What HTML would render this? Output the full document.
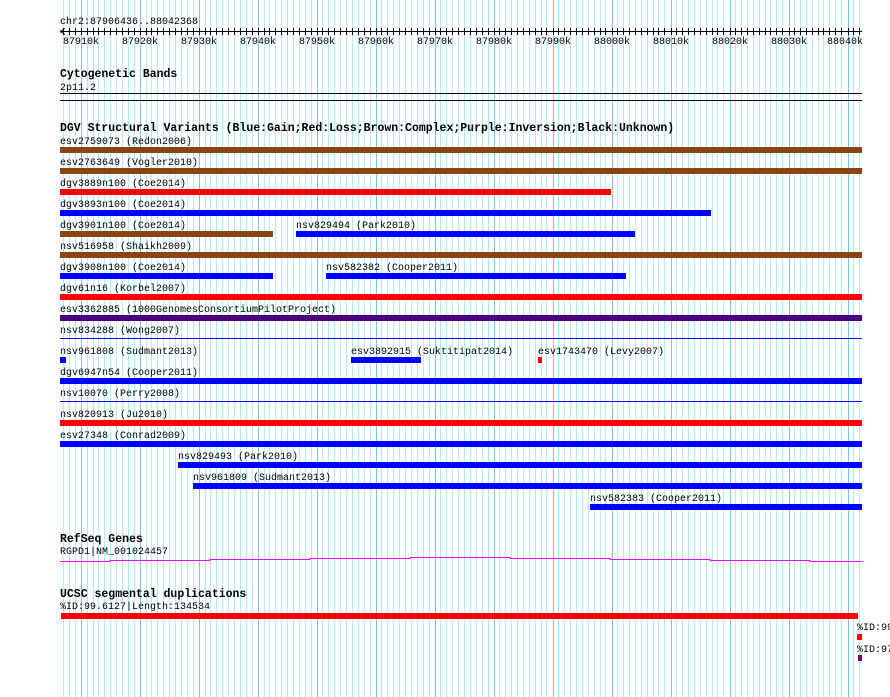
<!DOCTYPE html>
<html><head><meta charset="utf-8"><style>
html,body{margin:0;padding:0;background:#fff;width:890px;height:697px;overflow:hidden}
svg{display:block}
text{font-family:"Liberation Mono",monospace;font-size:10px;fill:#000}
.t{font-weight:bold;font-size:11.5px}
</style></head><body>
<svg width="890" height="697" viewBox="0 0 890 697" xmlns="http://www.w3.org/2000/svg">
<path shape-rendering="crispEdges" stroke="#b2ecf0" stroke-width="1" fill="none" d="M63.5 0V697M69.5 0V697M75.5 0V697M87.5 0V697M93.5 0V697M98.5 0V697M104.5 0V697M110.5 0V697M116.5 0V697M122.5 0V697M128.5 0V697M134.5 0V697M146.5 0V697M151.5 0V697M157.5 0V697M163.5 0V697M169.5 0V697M175.5 0V697M181.5 0V697M187.5 0V697M193.5 0V697M205.5 0V697M210.5 0V697M216.5 0V697M222.5 0V697M228.5 0V697M234.5 0V697M240.5 0V697M246.5 0V697M252.5 0V697M264.5 0V697M269.5 0V697M275.5 0V697M281.5 0V697M287.5 0V697M293.5 0V697M299.5 0V697M305.5 0V697M311.5 0V697M322.5 0V697M328.5 0V697M334.5 0V697M340.5 0V697M346.5 0V697M352.5 0V697M358.5 0V697M364.5 0V697M370.5 0V697M381.5 0V697M387.5 0V697M393.5 0V697M399.5 0V697M405.5 0V697M411.5 0V697M417.5 0V697M423.5 0V697M429.5 0V697M440.5 0V697M446.5 0V697M452.5 0V697M458.5 0V697M464.5 0V697M470.5 0V697M476.5 0V697M482.5 0V697M488.5 0V697M499.5 0V697M505.5 0V697M511.5 0V697M517.5 0V697M523.5 0V697M529.5 0V697M535.5 0V697M541.5 0V697M546.5 0V697M558.5 0V697M564.5 0V697M570.5 0V697M576.5 0V697M582.5 0V697M588.5 0V697M594.5 0V697M600.5 0V697M605.5 0V697M617.5 0V697M623.5 0V697M629.5 0V697M635.5 0V697M641.5 0V697M647.5 0V697M653.5 0V697M658.5 0V697M664.5 0V697M676.5 0V697M682.5 0V697M688.5 0V697M694.5 0V697M700.5 0V697M706.5 0V697M712.5 0V697M717.5 0V697M723.5 0V697M735.5 0V697M741.5 0V697M747.5 0V697M753.5 0V697M759.5 0V697M765.5 0V697M770.5 0V697M776.5 0V697M782.5 0V697M794.5 0V697M800.5 0V697M806.5 0V697M812.5 0V697M818.5 0V697M823.5 0V697M829.5 0V697M835.5 0V697M841.5 0V697M853.5 0V697M859.5 0V697"/>
<path shape-rendering="crispEdges" stroke="#7fc2ea" stroke-width="1" fill="none" d="M81.5 0V697M140.5 0V697M199.5 0V697M258.5 0V697M317.5 0V697M376.5 0V697M435.5 0V697M494.5 0V697M553.5 0V697M612.5 0V697M671.5 0V697M730.5 0V697M789.5 0V697M848.5 0V697"/>

<text x="60" y="24">chr2:87906436..88042368</text>
<rect x="60" y="31" width="802" height="1" fill="#000"/>
<path shape-rendering="crispEdges" stroke="#000" stroke-width="1" d="M63.5 28V35M69.5 28V35M75.5 28V35M81.5 28V35M87.5 28V35M93.5 28V35M98.5 28V35M104.5 28V35M110.5 28V35M116.5 28V35M122.5 28V35M128.5 28V35M134.5 28V35M140.5 28V35M146.5 28V35M151.5 28V35M157.5 28V35M163.5 28V35M169.5 28V35M175.5 28V35M181.5 28V35M187.5 28V35M193.5 28V35M199.5 28V35M205.5 28V35M210.5 28V35M216.5 28V35M222.5 28V35M228.5 28V35M234.5 28V35M240.5 28V35M246.5 28V35M252.5 28V35M258.5 28V35M264.5 28V35M269.5 28V35M275.5 28V35M281.5 28V35M287.5 28V35M293.5 28V35M299.5 28V35M305.5 28V35M311.5 28V35M317.5 28V35M322.5 28V35M328.5 28V35M334.5 28V35M340.5 28V35M346.5 28V35M352.5 28V35M358.5 28V35M364.5 28V35M370.5 28V35M376.5 28V35M381.5 28V35M387.5 28V35M393.5 28V35M399.5 28V35M405.5 28V35M411.5 28V35M417.5 28V35M423.5 28V35M429.5 28V35M435.5 28V35M440.5 28V35M446.5 28V35M452.5 28V35M458.5 28V35M464.5 28V35M470.5 28V35M476.5 28V35M482.5 28V35M488.5 28V35M494.5 28V35M499.5 28V35M505.5 28V35M511.5 28V35M517.5 28V35M523.5 28V35M529.5 28V35M535.5 28V35M541.5 28V35M546.5 28V35M553.5 28V35M558.5 28V35M564.5 28V35M570.5 28V35M576.5 28V35M582.5 28V35M588.5 28V35M594.5 28V35M600.5 28V35M605.5 28V35M612.5 28V35M617.5 28V35M623.5 28V35M629.5 28V35M635.5 28V35M641.5 28V35M647.5 28V35M653.5 28V35M658.5 28V35M664.5 28V35M671.5 28V35M676.5 28V35M682.5 28V35M688.5 28V35M694.5 28V35M700.5 28V35M706.5 28V35M712.5 28V35M717.5 28V35M723.5 28V35M730.5 28V35M735.5 28V35M741.5 28V35M747.5 28V35M753.5 28V35M759.5 28V35M765.5 28V35M770.5 28V35M776.5 28V35M782.5 28V35M789.5 28V35M794.5 28V35M800.5 28V35M806.5 28V35M812.5 28V35M818.5 28V35M823.5 28V35M829.5 28V35M835.5 28V35M841.5 28V35M848.5 28V35M853.5 28V35M859.5 28V35"/>
<path d="M60 31.5 L65 28.5 M60 31.5 L65 34.5" stroke="#000" stroke-width="1" fill="none"/>
<g text-anchor="middle">
<text x="81" y="44">87910k</text><text x="140" y="44">87920k</text><text x="199" y="44">87930k</text><text x="258" y="44">87940k</text><text x="317" y="44">87950k</text><text x="376" y="44">87960k</text><text x="435" y="44">87970k</text><text x="494" y="44">87980k</text><text x="553" y="44">87990k</text><text x="612" y="44">88000k</text><text x="671" y="44">88010k</text><text x="730" y="44">88020k</text><text x="789" y="44">88030k</text><text x="845" y="44">88040k</text>
</g>

<text class="t" x="60" y="77">Cytogenetic Bands</text>
<text x="60" y="90">2p11.2</text>
<rect x="60" y="93" width="802" height="1" fill="#000"/>
<rect x="60" y="100" width="802" height="1" fill="#000"/>

<text class="t" x="60" y="131">DGV Structural Variants (Blue:Gain;Red:Loss;Brown:Complex;Purple:Inversion;Black:Unknown)</text>

<text x="60" y="144">esv2759073 (Redon2006)</text>
<rect x="60" y="147" width="802" height="6" fill="#8b4513"/>
<text x="60" y="165">esv2763649 (Vogler2010)</text>
<rect x="60" y="168" width="802" height="6" fill="#8b4513"/>
<text x="60" y="186">dgv3889n100 (Coe2014)</text>
<rect x="60" y="189" width="551" height="6" fill="#f00"/>
<text x="60" y="207">dgv3893n100 (Coe2014)</text>
<rect x="60" y="210" width="651" height="6" fill="#00f"/>
<text x="60" y="228">dgv3901n100 (Coe2014)</text>
<rect x="60" y="231" width="213" height="6" fill="#8b4513"/>
<text x="296" y="228">nsv829494 (Park2010)</text>
<rect x="296" y="231" width="339" height="6" fill="#00f"/>
<text x="60" y="249">nsv516958 (Shaikh2009)</text>
<rect x="60" y="252" width="802" height="6" fill="#8b4513"/>
<text x="60" y="270">dgv3908n100 (Coe2014)</text>
<rect x="60" y="273" width="213" height="6" fill="#00f"/>
<text x="326" y="270">nsv582382 (Cooper2011)</text>
<rect x="326" y="273" width="300" height="6" fill="#00f"/>
<text x="60" y="291">dgv61n16 (Korbel2007)</text>
<rect x="60" y="294" width="802" height="6" fill="#f00"/>
<text x="60" y="312">esv3362885 (1000GenomesConsortiumPilotProject)</text>
<rect x="60" y="315" width="802" height="6" fill="#4b0082"/>
<text x="60" y="333">nsv834288 (Wong2007)</text>
<rect x="60" y="338" width="802" height="1" fill="#00f"/>
<text x="60" y="354">nsv961808 (Sudmant2013)</text>
<rect x="60" y="357" width="6" height="6" fill="#00f"/>
<text x="351" y="354">esv3892915 (Suktitipat2014)</text>
<rect x="351" y="357" width="70" height="6" fill="#00f"/>
<text x="538" y="354">esv1743470 (Levy2007)</text>
<rect x="538" y="357" width="4" height="6" fill="#f00"/>
<text x="60" y="375">dgv6947n54 (Cooper2011)</text>
<rect x="60" y="378" width="802" height="6" fill="#00f"/>
<text x="60" y="396">nsv10070 (Perry2008)</text>
<rect x="60" y="401" width="802" height="1" fill="#00f"/>
<text x="60" y="417">nsv820913 (Ju2010)</text>
<rect x="60" y="420" width="802" height="6" fill="#f00"/>
<text x="60" y="438">esv27348 (Conrad2009)</text>
<rect x="60" y="441" width="802" height="6" fill="#00f"/>
<text x="178" y="459">nsv829493 (Park2010)</text>
<rect x="178" y="462" width="684" height="6" fill="#00f"/>
<text x="193" y="480">nsv961809 (Sudmant2013)</text>
<rect x="193" y="483" width="669" height="6" fill="#00f"/>
<text x="590" y="501">nsv582383 (Cooper2011)</text>
<rect x="590" y="504" width="272" height="6" fill="#00f"/>

<text class="t" x="60" y="542">RefSeq Genes</text>
<text x="60" y="554">RGPD1|NM_001024457</text>
<path shape-rendering="crispEdges" d="M60 561.5 H110 V560.5 H210 V559.5 H310 V558.5 H410 V557.5 H510 V558.5 H610 V559.5 H710 V560.5 H810 V561.5 H862" stroke="#f0f" stroke-width="1" fill="none"/>

<text class="t" x="60" y="597">UCSC segmental duplications</text>
<text x="60" y="609">%ID:99.6127|Length:134534</text>
<rect x="61" y="613" width="797" height="6" fill="#f00"/>
<text x="857" y="630">%ID:99</text>
<rect x="857" y="634" width="5" height="6" fill="#f00"/>
<text x="857" y="652">%ID:97</text>
<rect x="858" y="655" width="4" height="6" fill="#800080"/>
</svg>
</body></html>
